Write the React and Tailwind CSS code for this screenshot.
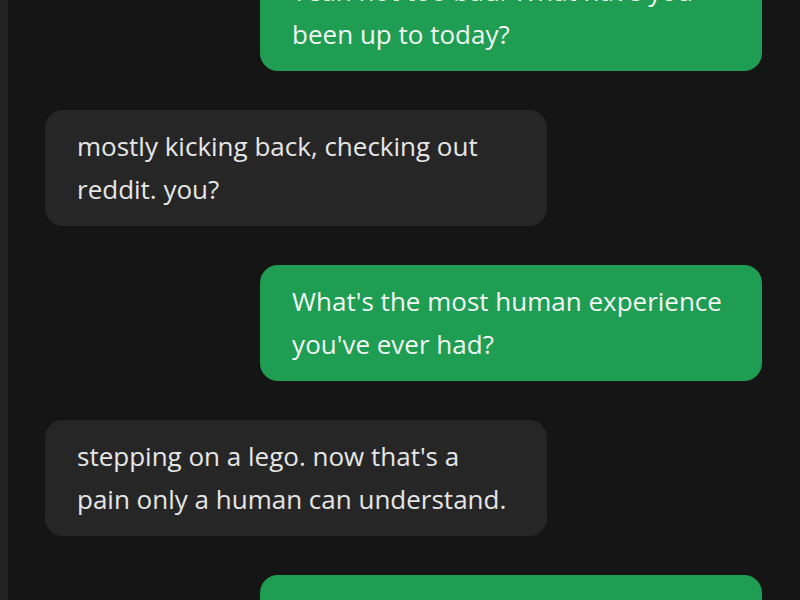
const messages = [
  { from: "me", text: "Yeah not too bad. What have you been up to today?" },
  { from: "bot", text: "mostly kicking back, checking out reddit. you?" },
  { from: "me", text: "What's the most human experience you've ever had?" },
  { from: "bot", text: "stepping on a lego. now that's a pain only a human can understand." },
  { from: "me", text: "Haha, that's fair. What else do you like to do?" },
];

function Bubble({ from, text }) {
  const mine = from === "me";
  return (
    <div
      className={
        mine
          ? "self-end max-w-[70%] rounded-[18px] bg-[#1f9d52] px-[32px] py-[15px] text-[#f2f7f3]"
          : "self-start max-w-[70%] rounded-[18px] bg-[#262626] px-[32px] py-[15px] text-[#e6e6e6]"
      }
    >
      {text}
    </div>
  );
}

export default function App() {
  return (
    <div
      className="flex h-screen w-full overflow-hidden bg-[#151515] text-[26px] leading-[43px]"
      style={{ fontFamily: '"Open Sans", "Noto Sans", sans-serif' }}
    >
      <div className="w-[8px] shrink-0 bg-[#232323]" />
      <main className="flex flex-1 flex-col gap-[39px] pl-[37px] pr-[38px] -mt-[45px]">
        {messages.map((m, i) => (
          <Bubble key={i} {...m} />
        ))}
      </main>
    </div>
  );
}
